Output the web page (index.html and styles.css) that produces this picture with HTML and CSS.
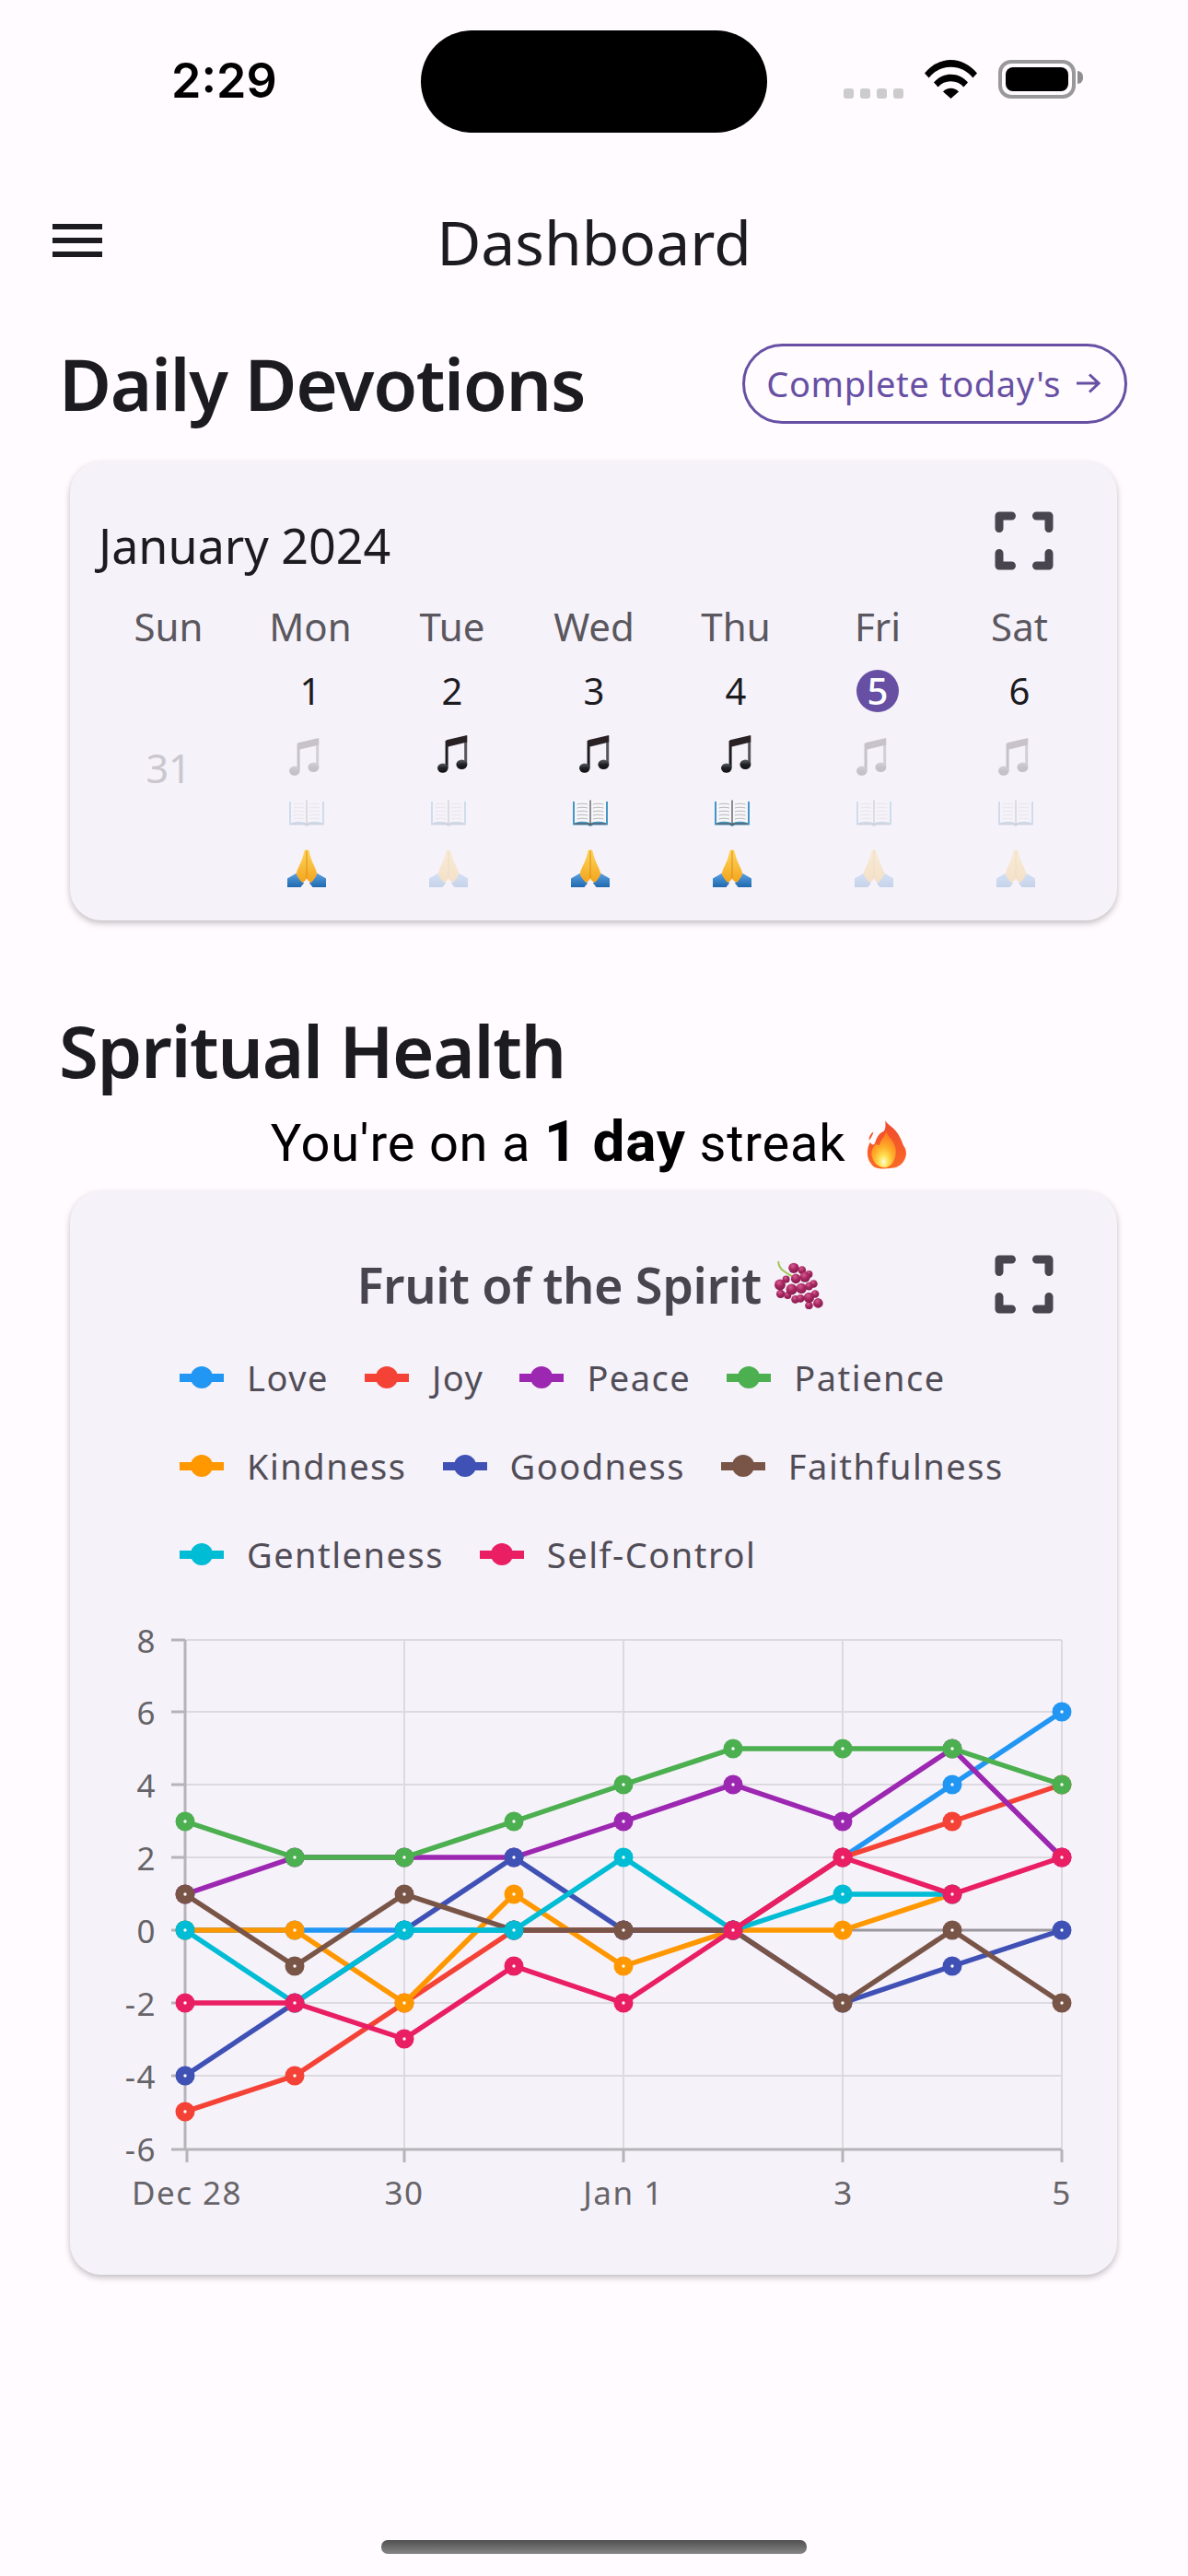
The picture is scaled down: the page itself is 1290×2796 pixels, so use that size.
FILE: index.html
```html
<!DOCTYPE html>
<html lang="en">
<head>
    <meta charset="UTF-8">
    <meta name="viewport" content="width=device-width, initial-scale=1.0">
    <title>Dashboard</title>
    <link rel="stylesheet" href="styles.css">
</head>
<body>
    <!-- shared emoji and icon drawings -->
    <svg class="sprites" width="0" height="0" aria-hidden="true">
        <defs>
            <linearGradient id="grad-head" x1="0" y1="0" x2="0" y2="1">
                <stop offset="0" stop-color="#5c6066"/>
                <stop offset="0.5" stop-color="#1f2124"/>
                <stop offset="1" stop-color="#101113"/>
            </linearGradient>
            <linearGradient id="grad-stem" x1="0" y1="0" x2="1" y2="0">
                <stop offset="0" stop-color="#17181a"/>
                <stop offset="1" stop-color="#5a5a60"/>
            </linearGradient>
            <linearGradient id="grad-hand" x1="0" y1="0" x2="0" y2="1">
                <stop offset="0" stop-color="#ffd65c"/>
                <stop offset="1" stop-color="#f3a41c"/>
            </linearGradient>
            <linearGradient id="grad-sleeve" x1="0" y1="0" x2="0" y2="1">
                <stop offset="0" stop-color="#5a9fe2"/>
                <stop offset="1" stop-color="#1f69ae"/>
            </linearGradient>
            <radialGradient id="grad-berry" cx="0.4" cy="0.3" r="0.8">
                <stop offset="0" stop-color="#d65c90"/>
                <stop offset="0.45" stop-color="#a82861"/>
                <stop offset="1" stop-color="#7c1747"/>
            </radialGradient>
            <linearGradient id="grad-flame-outer" x1="0" y1="0" x2="0" y2="1">
                <stop offset="0" stop-color="#ef4a2e"/>
                <stop offset="1" stop-color="#fb6a26"/>
            </linearGradient>
            <radialGradient id="grad-flame-inner" cx="0.5" cy="0.84" r="0.75">
                <stop offset="0" stop-color="#fffde0"/>
                <stop offset="0.22" stop-color="#ffe45a"/>
                <stop offset="0.55" stop-color="#ffb02a"/>
                <stop offset="1" stop-color="#ff7d22"/>
            </radialGradient>

            <symbol id="note" viewBox="0 0 33 41">
                <path fill="url(#grad-stem)" d="M8.600 6h3v29h-3zM29.200 1h3v30h-3z"/>
                <path fill="#2a2125" d="M9.600 5.200 32.200 0v7.600L9.600 13z"/>
                <ellipse cx="5.800" cy="35.600" rx="5.800" ry="5.200" fill="url(#grad-head)"/>
                <ellipse cx="26.400" cy="31.800" rx="6" ry="5.200" fill="url(#grad-head)"/>
            </symbol>

            <symbol id="book" viewBox="0 0 38 30">
                <path fill="#4295c4" d="M0 3h38v25.600H22L19 30l-3-1.400H0z"/>
                <path fill="#5d5c58" d="M2 26.400h34v1.400H22l-3 1-3-1H2z"/>
                <path fill="#f6f6f8" d="M2 2.400C8 .4 13 .4 18 2v24C13 24.400 8 24.400 2 26.200z"/>
                <path fill="#f6f6f8" d="M36 2.400C30 .4 25 .4 20 2v24c5-1.600 10-1.600 16 .2z"/>
                <path fill="#8d8d92" d="M18 1.600h2v25h-2z"/>
                <path stroke="#a6a6ac" stroke-width="0.8" fill="none" d="M4.600 6c3-1 8-1 11.400 0M4.600 10c3-1 8-1 11.400 0M4.600 14c3-1 8-1 11.400 0M4.600 18c3-1 8-1 11.400 0M4.600 22c3-1 8-1 11.400 0M22 6c3-1 8-1 11.400 0M22 10c3-1 8-1 11.400 0M22 14c3-1 8-1 11.400 0M22 18c3-1 8-1 11.400 0M22 22c3-1 8-1 11.400 0"/>
            </symbol>

            <symbol id="hands" viewBox="0 0 42 41">
                <path fill="url(#grad-sleeve)" d="M0 41V31.500L9.500 26 18 36.500 14.500 41z"/>
                <path fill="url(#grad-sleeve)" d="M42 41V31.500L32.500 26 24 36.500l3.500 4.500z"/>
                <path fill="url(#grad-hand)" d="M18.800 .8c1-1 1.800-.8 2.200.2.400-1 1.200-1.200 2.200-.2 1 3 1.400 6 2.600 9.200 1.600 5 4.600 9.600 6.200 15 .4 1.600-.4 3-1 4.400-1.400 2.400-3 4.400-5 6.600-2-1-3.800-2.600-5-4.600-1.200 2-3 3.600-5 4.600-2-2.200-3.600-4.200-5-6.600-.6-1.400-1.400-2.800-1-4.400 1.600-5.400 4.600-10 6.200-15 1.200-3.200 1.600-6.200 2.600-9.200z"/>
                <path fill="none" stroke="#d98c1a" stroke-width="1" d="M21 1.200V31"/>
            </symbol>

            <symbol id="grapes" viewBox="212 20 160 160">
                <path fill="none" stroke="#9cc653" stroke-width="6" stroke-linecap="round" d="M225 25c0 14 8 24 20 32l22 14"/>
                <g fill="url(#grad-berry)">
                    <circle cx="302" cy="52" r="13"/><circle cx="325" cy="65" r="12"/><circle cx="250" cy="82" r="12"/>
                    <circle cx="340" cy="97" r="13"/><circle cx="232" cy="130" r="14"/><circle cx="255" cy="135" r="12"/>
                    <circle cx="280" cy="148" r="13"/><circle cx="297" cy="145" r="13"/><circle cx="345" cy="130" r="13"/>
                    <circle cx="325" cy="168" r="13"/><circle cx="325" cy="105" r="13"/><circle cx="275" cy="45" r="17"/>
                    <circle cx="230" cy="100" r="18"/><circle cx="282" cy="80" r="16"/><circle cx="312" cy="75" r="17"/>
                    <circle cx="268" cy="115" r="18"/><circle cx="300" cy="112" r="17"/><circle cx="325" cy="142" r="17"/>
                    <circle cx="355" cy="160" r="16"/>
                </g>
            </symbol>

            <symbol id="flame" viewBox="68 28 127 160">
                <path fill="url(#grad-flame-outer)" d="M125 28c5 14 25 20 40 42 13 20 15 30 20 42 15 18 10 53-20 68-15 8-70 10-80-2-20-18-25-48-10-78 7 10 13 12 17 0 4-15 13-30 26-35 10-7 7-25 7-37z"/>
                <path fill="#f4552f" d="M86 66c-2 10-8 20-14 28-2-10 4-22 14-28z"/>
                <path fill="url(#grad-flame-inner)" d="M128 66c5 14 24 28 30 52 5 24-4 56-28 64-24 4-46-14-50-40-2-18 8-30 16-38 4 8 8 8 12-2 4-12 16-22 20-36z"/>
            </symbol>

            <symbol id="fullscreen" viewBox="0 0 24 24">
                <path d="M6 14c-.55 0-1 .45-1 1v3c0 .55.45 1 1 1h3c.55 0 1-.45 1-1s-.45-1-1-1H7v-2c0-.55-.45-1-1-1zm0-4c.55 0 1-.45 1-1V7h2c.55 0 1-.45 1-1s-.45-1-1-1H6c-.55 0-1 .45-1 1v3c0 .55.45 1 1 1zm11 7h-2c-.55 0-1 .45-1 1s.45 1 1 1h3c.55 0 1-.45 1-1v-3c0-.55-.45-1-1-1s-1 .45-1 1v2zM14 6c0 .55.45 1 1 1h2v2c0 .55.45 1 1 1s1-.45 1-1V6c0-.55-.45-1-1-1h-3c-.55 0-1 .45-1 1z"/>
            </symbol>
        </defs>
    </svg>

    <div class="page">
        <div class="status-bar">
            <div class="time">2:29</div>
            <div class="island"></div>
            <div class="status-icons">
                <div class="signal"><span></span><span></span><span></span><span></span></div>
                <svg class="wifi" viewBox="0 0 57 42">
                    <path d="M0 14.500C7.500 5.500 17.500 0 28.500 0S49.500 5.500 57 14.500l-4.600 5C46.500 12 38 7.800 28.500 7.800S10.500 12 4.600 19.500z"/>
                    <path d="M10 24.500c4.800-5.500 11-8.700 18.500-8.700S42.200 19 47 24.500l-4.600 5c-3.600-4-8.400-6.200-13.900-6.200S18.200 25.500 14.600 29.500z"/>
                    <path d="M20 34.500c2.400-2.500 5.200-3.700 8.500-3.700s6.100 1.200 8.500 3.700L28.500 42z"/>
                </svg>
                <div class="battery"><div class="battery-fill"></div></div>
            </div>
        </div>

        <header class="app-bar">
            <div class="menu"><span></span><span></span><span></span></div>
            <div class="app-title">Dashboard</div>
        </header>

        <section class="section-head">
            <h2>Daily Devotions</h2>
            <button class="complete">
                Complete today's
                <svg class="arrow" viewBox="0 0 27 22"><path d="M1 11h24M15 1.500 25 11l-10 9.500"/></svg>
            </button>
        </section>

        <section class="card calendar">
            <div class="calendar-head">
                <div class="month">January 2024</div>
                <svg class="expand"><use href="#fullscreen"/></svg>
            </div>
            <div class="weekdays">
                <div>Sun</div><div>Mon</div><div>Tue</div><div>Wed</div><div>Thu</div><div>Fri</div><div>Sat</div>
            </div>
            <div class="days">
                <div class="day">
                    <div class="date-out">31</div>
                </div>
                <div class="day">
                    <div class="date">1</div>
                    <svg class="note off"><use href="#note"/></svg>
                    <svg class="book off"><use href="#book"/></svg>
                    <svg class="hands"><use href="#hands"/></svg>
                </div>
                <div class="day">
                    <div class="date">2</div>
                    <svg class="note"><use href="#note"/></svg>
                    <svg class="book off"><use href="#book"/></svg>
                    <svg class="hands off"><use href="#hands"/></svg>
                </div>
                <div class="day">
                    <div class="date">3</div>
                    <svg class="note"><use href="#note"/></svg>
                    <svg class="book"><use href="#book"/></svg>
                    <svg class="hands"><use href="#hands"/></svg>
                </div>
                <div class="day">
                    <div class="date">4</div>
                    <svg class="note"><use href="#note"/></svg>
                    <svg class="book"><use href="#book"/></svg>
                    <svg class="hands"><use href="#hands"/></svg>
                </div>
                <div class="day">
                    <div class="date today">5</div>
                    <svg class="note off"><use href="#note"/></svg>
                    <svg class="book off"><use href="#book"/></svg>
                    <svg class="hands off"><use href="#hands"/></svg>
                </div>
                <div class="day">
                    <div class="date">6</div>
                    <svg class="note off"><use href="#note"/></svg>
                    <svg class="book off"><use href="#book"/></svg>
                    <svg class="hands off"><use href="#hands"/></svg>
                </div>
            </div>
        </section>

        <h2 class="health-title">Spritual Health</h2>
        <p class="streak">You're on a <strong>1 day</strong> streak <svg class="flame"><use href="#flame"/></svg></p>

        <section class="card fruit">
            <div class="fruit-head">
                <div class="fruit-title">Fruit of the Spirit <svg class="grapes"><use href="#grapes"/></svg></div>
                <svg class="expand"><use href="#fullscreen"/></svg>
            </div>

            <div class="legend">
                <div class="legend-item love"><i></i>Love</div>
                <div class="legend-item joy"><i></i>Joy</div>
                <div class="legend-item peace"><i></i>Peace</div>
                <div class="legend-item patience"><i></i>Patience</div>
                <div class="legend-item kindness"><i></i>Kindness</div>
                <div class="legend-item goodness"><i></i>Goodness</div>
                <div class="legend-item faithfulness"><i></i>Faithfulness</div>
                <div class="legend-item gentleness"><i></i>Gentleness</div>
                <div class="legend-item self-control"><i></i>Self-Control</div>
            </div>

            <!-- viewBox uses page coordinates so the points read off the picture directly -->
            <svg class="chart" viewBox="76 1740 1137 670">
                <defs>
                    <marker id="m-love" markerUnits="userSpaceOnUse" markerWidth="24" markerHeight="24" refX="12" refY="12"><circle cx="12" cy="12" r="10.500" fill="#2196f3"/><circle cx="12" cy="12" r="1.700" fill="#fff"/></marker>
                    <marker id="m-joy" markerUnits="userSpaceOnUse" markerWidth="24" markerHeight="24" refX="12" refY="12"><circle cx="12" cy="12" r="10.500" fill="#f44336"/><circle cx="12" cy="12" r="1.700" fill="#fff"/></marker>
                    <marker id="m-peace" markerUnits="userSpaceOnUse" markerWidth="24" markerHeight="24" refX="12" refY="12"><circle cx="12" cy="12" r="10.500" fill="#9c27b0"/><circle cx="12" cy="12" r="1.700" fill="#fff"/></marker>
                    <marker id="m-patience" markerUnits="userSpaceOnUse" markerWidth="24" markerHeight="24" refX="12" refY="12"><circle cx="12" cy="12" r="10.500" fill="#4caf50"/><circle cx="12" cy="12" r="1.700" fill="#fff"/></marker>
                    <marker id="m-kindness" markerUnits="userSpaceOnUse" markerWidth="24" markerHeight="24" refX="12" refY="12"><circle cx="12" cy="12" r="10.500" fill="#ff9800"/><circle cx="12" cy="12" r="1.700" fill="#fff"/></marker>
                    <marker id="m-goodness" markerUnits="userSpaceOnUse" markerWidth="24" markerHeight="24" refX="12" refY="12"><circle cx="12" cy="12" r="10.500" fill="#3f51b5"/><circle cx="12" cy="12" r="1.700" fill="#fff"/></marker>
                    <marker id="m-faithfulness" markerUnits="userSpaceOnUse" markerWidth="24" markerHeight="24" refX="12" refY="12"><circle cx="12" cy="12" r="10.500" fill="#795548"/><circle cx="12" cy="12" r="1.700" fill="#fff"/></marker>
                    <marker id="m-gentleness" markerUnits="userSpaceOnUse" markerWidth="24" markerHeight="24" refX="12" refY="12"><circle cx="12" cy="12" r="10.500" fill="#00bcd4"/><circle cx="12" cy="12" r="1.700" fill="#fff"/></marker>
                    <marker id="m-self" markerUnits="userSpaceOnUse" markerWidth="24" markerHeight="24" refX="12" refY="12"><circle cx="12" cy="12" r="10.500" fill="#e91e63"/><circle cx="12" cy="12" r="1.700" fill="#fff"/></marker>
                </defs>

                <!-- grid -->
                <path class="grid" d="M201 1779H1153M201 1857H1153M201 1936H1153M201 2015H1153M201 2173H1153M201 2252H1153M439 1779V2331M677 1779V2331M915 1779V2331M1153 1779V2331"/>
                <path class="zero" d="M201 2094H1153"/>
                <path class="axis" d="M201 1779V2331M201 2332H1153"/>
                <path class="ticks" d="M186 1779H201M186 1857H201M186 1936H201M186 2015H201M186 2094H201M186 2173H201M186 2252H201M186 2332H201M203 2332V2346M439 2332V2346M677 2332V2346M915 2332V2346M1153 2332V2346"/>

                <text class="y-label" x="170" y="1793">8</text>
                <text class="y-label" x="170" y="1871">6</text>
                <text class="y-label" x="170" y="1950">4</text>
                <text class="y-label" x="170" y="2029">2</text>
                <text class="y-label" x="170" y="2108">0</text>
                <text class="y-label" x="170" y="2187">-2</text>
                <text class="y-label" x="170" y="2266">-4</text>
                <text class="y-label" x="170" y="2345">-6</text>

                <text class="x-label" x="203" y="2392">Dec 28</text>
                <text class="x-label" x="439" y="2392">30</text>
                <text class="x-label" x="677" y="2392">Jan 1</text>
                <text class="x-label" x="916" y="2392">3</text>
                <text class="x-label" x="1153" y="2392">5</text>

                <!-- series, later ones sit on top -->
                <polyline class="series" stroke="#2196f3" marker-start="url(#m-love)" marker-mid="url(#m-love)" marker-end="url(#m-love)" points="201,2094 320,2094 439,2094 558,2094 677,2094 796,2094 915,2015 1034,1936 1153,1857"/>
                <polyline class="series" stroke="#f44336" marker-start="url(#m-joy)" marker-mid="url(#m-joy)" marker-end="url(#m-joy)" points="201,2291 320,2252 439,2173 558,2094 677,2094 796,2094 915,2015 1034,1976 1153,1936"/>
                <polyline class="series" stroke="#9c27b0" marker-start="url(#m-peace)" marker-mid="url(#m-peace)" marker-end="url(#m-peace)" points="201,2055 320,2015 439,2015 558,2015 677,1976 796,1936 915,1976 1034,1897 1153,2015"/>
                <polyline class="series" stroke="#4caf50" marker-start="url(#m-patience)" marker-mid="url(#m-patience)" marker-end="url(#m-patience)" points="201,1976 320,2015 439,2015 558,1976 677,1936 796,1897 915,1897 1034,1897 1153,1936"/>
                <polyline class="series" stroke="#ff9800" marker-start="url(#m-kindness)" marker-mid="url(#m-kindness)" marker-end="url(#m-kindness)" points="201,2094 320,2094 439,2173 558,2055 677,2133 796,2094 915,2094 1034,2055"/>
                <polyline class="series" stroke="#3f51b5" marker-start="url(#m-goodness)" marker-mid="url(#m-goodness)" marker-end="url(#m-goodness)" points="201,2252 320,2173 439,2094 558,2015 677,2094 796,2094 915,2173 1034,2133 1153,2094"/>
                <polyline class="series" stroke="#795548" marker-start="url(#m-faithfulness)" marker-mid="url(#m-faithfulness)" marker-end="url(#m-faithfulness)" points="201,2055 320,2133 439,2055 558,2094 677,2094 796,2094 915,2173 1034,2094 1153,2173"/>
                <polyline class="series" stroke="#00bcd4" marker-start="url(#m-gentleness)" marker-mid="url(#m-gentleness)" marker-end="url(#m-gentleness)" points="201,2094 320,2173 439,2094 558,2094 677,2015 796,2094 915,2055 1034,2055"/>
                <polyline class="series" stroke="#e91e63" marker-start="url(#m-self)" marker-mid="url(#m-self)" marker-end="url(#m-self)" points="201,2173 320,2173 439,2212 558,2133 677,2173 796,2094 915,2015 1034,2055 1153,2015"/>
            </svg>
        </section>

        <div class="home-indicator"></div>
    </div>
</body>
</html>
```

FILE: styles.css
```css
* {
    margin: 0;
    padding: 0;
    box-sizing: border-box;
}

body {
    background: #fffbfe;
    color: #1c1b1f;
    font-family: "Noto Sans", "Open Sans", sans-serif;
}

.sprites {
    position: absolute;
}

.page {
    display: flex;
    flex-direction: column;
    width: 1290px;
    height: 2796px;
    overflow: hidden;
}

/* status bar */
.status-bar {
    display: grid;
    grid-template-columns: 457px 376px 457px;
    padding-top: 33px;
    height: 144px;
}

.time {
    padding: 26px 0 0 186px;
    font-family: Inter, sans-serif;
    font-size: 52px;
    font-weight: 600;
    line-height: 58px;
    color: #000;
}

.island {
    height: 111px;
    background: #000;
    border-radius: 56px;
}

.status-icons {
    display: flex;
    align-items: flex-end;
    height: 74px;
    padding-left: 83px;
}

.signal {
    display: flex;
    gap: 7px;
    margin-right: 23px;
}

.signal span {
    width: 11px;
    height: 11px;
    background: #cccccc;
    border-radius: 3px;
}

.wifi {
    width: 57px;
    height: 42px;
    margin-right: 23px;
}

.battery {
    position: relative;
    width: 84px;
    height: 42px;
    padding: 4px;
    border: 4px solid #999999;
    border-radius: 14px;
}

.battery::after {
    content: "";
    position: absolute;
    top: 8px;
    right: -12px;
    width: 6px;
    height: 14px;
    background: #8e8e8e;
    border-radius: 0 6px 6px 0;
}

.battery-fill {
    height: 100%;
    background: #000;
    border-radius: 8px;
}

/* app bar */
.app-bar {
    display: flex;
    align-items: center;
    position: relative;
    justify-content: center;
    padding: 73px 0 59px;
}

.menu {
    position: absolute;
    left: 57px;
    top: 99px;
    display: flex;
    flex-direction: column;
    gap: 9px;
}

.menu span {
    display: block;
    width: 54px;
    height: 6px;
    background: #1c1b1f;
}

.app-title {
    font-size: 66px;
    line-height: 90px;
}

/* section headings */
.section-head {
    display: flex;
    justify-content: space-between;
    align-items: center;
    padding: 0 66px 0 64px;
}

h2 {
    font-size: 78px;
    font-weight: 600;
    line-height: 100px;
    letter-spacing: -1.400px;
}

.complete {
    display: flex;
    align-items: center;
    gap: 16px;
    height: 87px;
    padding: 0 26px 0 23px;
    background: transparent;
    border: 3px solid #6750a4;
    border-radius: 44px;
    color: #6750a4;
    font-family: inherit;
    font-size: 38px;
    letter-spacing: 0.6px;
}

.arrow {
    width: 27px;
    height: 22px;
    fill: none;
    stroke: #6750a4;
    stroke-width: 3;
}

/* cards */
.card {
    width: 1137px;
    margin-left: 76px;
    background: #f6f2fa;
    border-radius: 34px;
    box-shadow: 0 3px 7px rgba(0, 0, 0, 0.25);
}

.expand {
    width: 108px;
    height: 108px;
    fill: #49454f;
}

/* calendar */
.calendar {
    margin-top: 35px;
    padding: 32px 0 36px 30px;
}

.calendar-head {
    display: flex;
    justify-content: space-between;
    align-items: center;
    padding-right: 47px;
}

.month {
    margin: 8px 0 0 1px;
    font-size: 52px;
}

.weekdays,
.days {
    display: grid;
    grid-template-columns: repeat(7, 154px);
}

.weekdays {
    margin-top: 10px;
    font-size: 42px;
    line-height: 58px;
    text-align: center;
    color: #5a575e;
}

.days {
    margin-top: 18px;
}

.day {
    display: flex;
    flex-direction: column;
    align-items: center;
}

.date {
    width: 46px;
    height: 46px;
    border-radius: 50%;
    font-size: 40px;
    line-height: 46px;
    text-align: center;
}

.today {
    background: #6750a4;
    color: #fff;
    font-weight: 500;
}

.date-out {
    margin-top: 84px;
    font-size: 43px;
    line-height: 46px;
    color: #cac7ce;
}

.note {
    width: 33px;
    height: 41px;
    margin-top: 25px;
}

.book {
    width: 38px;
    height: 30px;
    margin: 28px 8px 0 0;
}

.hands {
    width: 42px;
    height: 41px;
    margin: 25px 8px 0 0;
}

.off {
    opacity: 0.22;
}

.note.off {
    transform: translate(-7px, 3px);
}

/* spiritual health */
.health-title {
    margin: 91px 0 0 64px;
}

.streak {
    margin-top: 19px;
    padding-right: 10px;
    font-family: Roboto, sans-serif;
    font-size: 56px;
    line-height: 64px;
    letter-spacing: 0.8px;
    text-align: center;
    color: #000;
}

.streak strong {
    font-size: 62px;
    line-height: 50px;
}

.flame {
    width: 45px;
    height: 53px;
    margin-left: 8px;
    vertical-align: -9px;
}

.fruit {
    margin-top: 20px;
    padding-top: 47px;
    padding-bottom: 58px;
}

.fruit-head {
    display: grid;
    grid-template-columns: 108px 1fr 108px;
    align-items: center;
    padding: 0 47px;
}

.fruit-title {
    grid-column: 2;
    padding-right: 8px;
    font-size: 54px;
    font-weight: 600;
    line-height: 62px;
    letter-spacing: -0.4px;
    text-align: center;
    color: #49454f;
}

.grapes {
    width: 53px;
    height: 53px;
    vertical-align: -6px;
}

/* legend */
.legend {
    display: flex;
    flex-wrap: wrap;
    gap: 42px 39px;
    margin-top: 20px;
    padding: 0 60px 0 119px;
}

.legend-item {
    display: flex;
    align-items: center;
    height: 54px;
    font-size: 38px;
    letter-spacing: 1.500px;
    color: #514d57;
}

.legend-item i {
    position: relative;
    width: 48px;
    height: 9px;
    margin-right: 25px;
    background: var(--c);
}

.legend-item i::after {
    content: "";
    position: absolute;
    left: 12px;
    top: -8px;
    width: 24px;
    height: 24px;
    background: var(--c);
    border-radius: 50%;
}

.love { --c: #2196f3; }
.joy { --c: #f44336; }
.peace { --c: #9c27b0; }
.patience { --c: #4caf50; }
.kindness { --c: #ff9800; }
.goodness { --c: #3f51b5; }
.faithfulness { --c: #795548; }
.gentleness { --c: #00bcd4; }
.self-control { --c: #e91e63; }

/* chart */
.chart {
    display: block;
    width: 1137px;
    height: 670px;
    margin-top: 27px;
}

.grid {
    fill: none;
    stroke: #dcdae0;
    stroke-width: 2;
}

.zero {
    fill: none;
    stroke: #9a989c;
    stroke-width: 3;
}

.axis,
.ticks {
    fill: none;
    stroke: #b6b4b8;
    stroke-width: 3;
}

.y-label,
.x-label {
    fill: #666468;
    font-family: "Noto Sans", sans-serif;
    font-size: 35px;
    letter-spacing: 1.500px;
}

.y-label {
    text-anchor: end;
}

.x-label {
    text-anchor: middle;
}

.series {
    fill: none;
    stroke-width: 5.500;
}

/* home indicator */
.home-indicator {
    flex: none;
    width: 462px;
    height: 15px;
    margin: auto 0 24px 414px;
    background: linear-gradient(#505050, #868686);
    border-radius: 7px;
}
```
